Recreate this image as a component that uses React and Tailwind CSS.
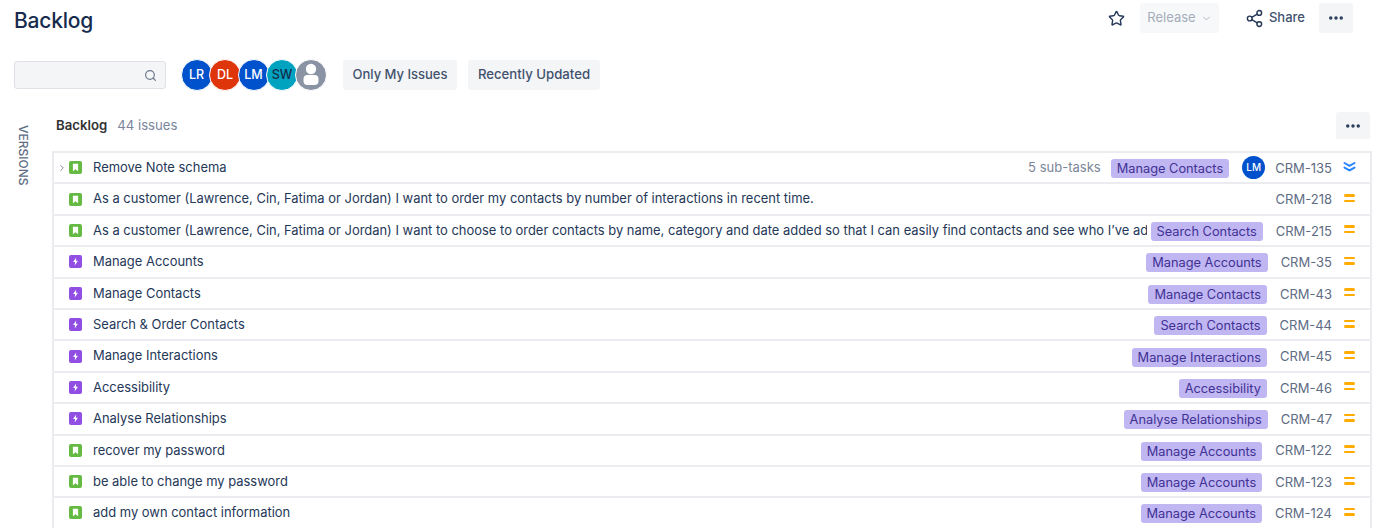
import { Star, ChevronDown, ChevronRight, Search, Share2, MoreHorizontal } from "lucide-react";

const issues = [
  { type: "story", title: "Remove Note schema", epic: "Manage Contacts", id: "CRM-135", subtasks: true, low: true },
  { type: "story", title: "As a customer (Lawrence, Cin, Fatima or Jordan) I want to order my contacts by number of interactions in recent time.", id: "CRM-218" },
  { type: "story", title: "As a customer (Lawrence, Cin, Fatima or Jordan) I want to choose to order contacts by name, category and date added so that I can easily find contacts and see who I’ve added recently", epic: "Search Contacts", id: "CRM-215" },
  { type: "epic", title: "Manage Accounts", epic: "Manage Accounts", id: "CRM-35" },
  { type: "epic", title: "Manage Contacts", epic: "Manage Contacts", id: "CRM-43" },
  { type: "epic", title: "Search & Order Contacts", epic: "Search Contacts", id: "CRM-44" },
  { type: "epic", title: "Manage Interactions", epic: "Manage Interactions", id: "CRM-45" },
  { type: "epic", title: "Accessibility", epic: "Accessibility", id: "CRM-46" },
  { type: "epic", title: "Analyse Relationships", epic: "Analyse Relationships", id: "CRM-47" },
  { type: "story", title: "recover my password", epic: "Manage Accounts", id: "CRM-122" },
  { type: "story", title: "be able to change my password", epic: "Manage Accounts", id: "CRM-123" },
  { type: "story", title: "add my own contact information", epic: "Manage Accounts", id: "CRM-124" },
];

const people = [
  { label: "LR", bg: "bg-[#0052cc]", text: "text-white" },
  { label: "DL", bg: "bg-[#de350b]", text: "text-white" },
  { label: "LM", bg: "bg-[#0052cc]", text: "text-white" },
  { label: "SW", bg: "bg-[#00a3bf]", text: "text-[#172b4d]" },
];

function TypeIcon({ type }) {
  if (type === "story") {
    return (
      <svg width="13" height="13" viewBox="0 0 13 13" className="shrink-0">
        <rect width="13" height="13" rx="2" fill="#65ba43" />
        <path d="M3.9 2.8h5.2v7.4L6.5 8.3l-2.6 1.9z" fill="#fff" />
      </svg>
    );
  }
  return (
    <svg width="13" height="13" viewBox="0 0 13 13" className="shrink-0">
      <rect width="13" height="13" rx="2" fill="#904ee2" />
      <path d="M7.2 2.6 4.1 7h2l-.4 3.4 3.2-4.6H6.8z" fill="#fff" />
    </svg>
  );
}

function IssueRow({ issue }) {
  return (
    <div className="flex h-[31.4px] items-center border-b-2 border-[#ebecf0] bg-white pl-[3px] pr-[14px]">
      <span className="flex w-[12px] shrink-0 justify-start">
        {issue.subtasks && <ChevronRight size={10} strokeWidth={2} className="text-[#6b778c]" />}
      </span>
      <TypeIcon type={issue.type} />
      <span className="ml-[11px] min-w-0 flex-1 overflow-hidden whitespace-nowrap text-[12.95px] text-[#253858]">{issue.title}</span>
      {issue.subtasks && <span className="ml-3 shrink-0 text-[13px] text-[#7a869a]">5 sub-tasks</span>}
      {issue.epic && (
        <span className={`mt-[2px] shrink-0 rounded-[3px] bg-[#c0b6f2] px-[6px] py-[1px] text-[12.8px] leading-[17px] text-[#403294] ${issue.subtasks ? "ml-[10px]" : "ml-[4px]"}`}>{issue.epic}</span>
      )}
      {issue.subtasks && (
        <span className="ml-[13px] flex h-[23px] w-[23px] shrink-0 items-center justify-center rounded-full bg-[#0052cc] text-[10px] font-medium text-white">LM</span>
      )}
      <span className={`mt-[2px] shrink-0 text-right text-[13px] text-[#5e6c84] ${issue.subtasks ? "ml-[10px]" : "ml-[13px]"}`}>{issue.id}</span>
      <span className="ml-[11px] mb-[2px] flex w-[13px] shrink-0 justify-center">
        {issue.low ? (
          <svg width="13" height="12" viewBox="0 0 13 12" fill="none" stroke="#2684ff" strokeWidth="2" strokeLinecap="round" strokeLinejoin="round">
            <path d="M1.5 2 6.5 4.8 11.5 2" />
            <path d="M1.5 6.6 6.5 9.4 11.5 6.6" />
          </svg>
        ) : (
          <span className="flex flex-col gap-[3px]">
            <span className="block h-[2.5px] w-[11px] rounded-sm bg-[#ffab00]" />
            <span className="block h-[2.5px] w-[11px] rounded-sm bg-[#ffab00]" />
          </span>
        )}
      </span>
    </div>
  );
}

export default function App() {
  return (
    <div className="h-[528px] w-[1384px] overflow-hidden bg-white font-['Inter',sans-serif] text-[#172b4d]">
      <div className="flex h-[37px] items-start justify-between pl-[14px] pr-[31px] pt-[3px]">
        <h1 className="text-[21px] font-medium leading-[36px] tracking-[-0.2px] text-[#172b4d]">Backlog</h1>
        <div className="flex items-center">
          <Star size={17} strokeWidth={2} className="text-[#253858]" />
          <button className="ml-[15px] flex h-[30px] w-[79px] items-center justify-center gap-[5px] rounded-[3px] bg-[#f7f8f9] text-[13px] text-[#a5adba]">
            Release <ChevronDown size={11} />
          </button>
          <button className="ml-[26px] flex items-center gap-[5px] text-[13px] font-medium text-[#42526e]">
            <Share2 size={19} strokeWidth={1.8} className="text-[#253858]" /> Share
          </button>
          <button className="ml-[14px] flex h-[30px] w-[34px] items-center justify-center rounded-[3px] bg-[#f4f5f7] text-[#253858]">
            <MoreHorizontal size={18} strokeWidth={2.6} />
          </button>
        </div>
      </div>

      <div className="mt-[23px] flex h-[30px] items-center pl-[14px]">
        <div className="flex h-[28px] w-[152px] items-center justify-end rounded-[3px] border border-[#dfe1e6] bg-[#f4f5f7] pr-[8px]">
          <Search size={13} strokeWidth={2.2} className="text-[#6b778c]" />
        </div>
        <div className="ml-[14.5px] flex">
          {people.map((p, i) => (
            <span key={i} className={`flex h-[32px] w-[32px] items-center justify-center rounded-full border border-white text-[12.5px] font-medium ${p.bg} ${p.text} ${i ? "-ml-[3.5px]" : ""}`}>
              {p.label}
            </span>
          ))}
          <span className="-ml-[3px] flex h-[32px] w-[32px] items-center justify-center overflow-hidden rounded-full border border-white bg-[#8993a4]">
            <svg width="18" height="26" viewBox="0 0 18 26">
              <circle cx="9" cy="7" r="5.2" fill="#fff" />
              <rect x="1.5" y="13" width="15" height="10" rx="4" fill="#fff" />
            </svg>
          </span>
        </div>
        <button className="ml-[16px] h-[30px] w-[114px] rounded-[3px] bg-[#f4f5f7] text-[13px] font-medium text-[#42526e]">Only My Issues</button>
        <button className="ml-[11px] h-[30px] w-[132px] rounded-[3px] bg-[#f4f5f7] text-[13.2px] font-medium text-[#42526e]">Recently Updated</button>
      </div>

      <div className="mt-[22px] flex">
        <div className="flex w-[52px] shrink-0 justify-center pt-[13px]">
          <span className="mr-[6px] h-fit text-[12px] font-medium leading-[14px] text-[#5e6c84] [writing-mode:vertical-rl]">VERSIONS</span>
        </div>
        <div className="w-[1320px]">
          <div className="flex h-[39px] items-start justify-between pl-[4px] pr-[2px]">
            <div className="flex items-baseline gap-[10px] pt-[4px] text-[13.2px]">
              <span className="font-semibold text-[#333333]">Backlog</span>
              <span className="text-[#7a869a]">44 issues</span>
            </div>
            <button className="flex h-[27px] w-[34px] items-center justify-center rounded-t-[3px] bg-[#f4f5f7] text-[#253858]">
              <MoreHorizontal size={18} strokeWidth={2.6} />
            </button>
          </div>
          <div className="border-x-2 border-t-2 border-[#ebecf0]">
            {issues.map((issue) => (
              <IssueRow key={issue.id} issue={issue} />
            ))}
          </div>
        </div>
      </div>
    </div>
  );
}
